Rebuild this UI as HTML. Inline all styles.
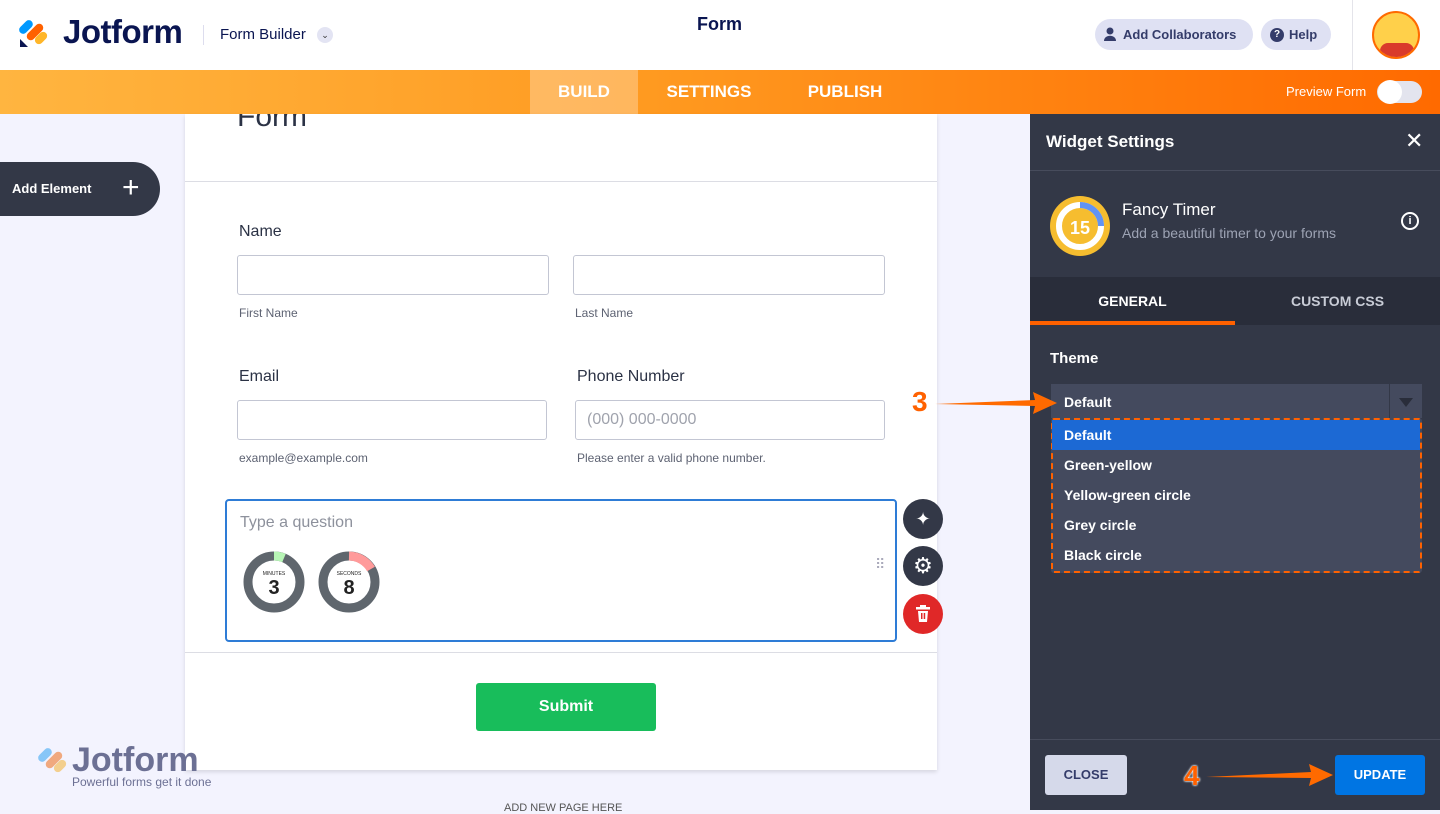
<!DOCTYPE html>
<html><head><meta charset="utf-8"><style>
*{box-sizing:border-box;margin:0;padding:0}
body{width:1440px;height:810px;overflow:hidden;background:#f3f3fe;font-family:"Liberation Sans",sans-serif;position:relative;color:#2b3245}
.abs{position:absolute}
.top{left:0;top:0;width:1440px;height:70px;background:#fff}
.bar{left:0;top:70px;width:1440px;height:44px;background:linear-gradient(90deg,#ffb540,#ff9a20 45%,#ff6a00)}
.tab{top:70px;height:44px;line-height:44px;color:#fff;font-size:17px;font-weight:bold;text-align:center}
.card{left:185px;top:114px;width:752px;height:656px;background:#fff;box-shadow:0 2px 4px rgba(0,0,0,.12)}
.lbl{font-size:16px;color:#2b3245}
.inp{border:1px solid #c3c6d3;border-radius:3px;background:#fff;height:40px}
.sub{font-size:12px;color:#5d6272}
.panel{left:1030px;top:114px;width:410px;height:696px;background:#333847}
.opt{left:1052px;width:368px;height:30px;line-height:30px;padding-left:12px;color:#fff;font-size:14px;font-weight:bold}
.rbtn{width:40px;height:40px;border-radius:50%;background:#333847}
</style></head><body>
<div class="abs top"></div>
<svg class="abs" style="left:19px;top:17px" width="30" height="32" viewBox="0 0 30 32">
<rect x="3" y="2" width="8" height="16" rx="4" transform="rotate(45 7 10)" fill="#0099ff"/>
<rect x="12" y="5" width="8" height="20" rx="4" transform="rotate(45 16 15)" fill="#ff6100"/>
<rect x="18" y="14" width="8" height="14" rx="4" transform="rotate(45 22 21)" fill="#ffb629"/>
<path d="M1 22 L1 30 L9 30 Z" fill="#0a1551"/></svg>
<div class="abs" style="left:63px;top:13px;font-size:33px;font-weight:bold;color:#0a1551;letter-spacing:-0.5px">Jotform</div>
<div class="abs" style="left:203px;top:25px;width:1px;height:20px;background:#dde"></div>
<div class="abs" style="left:220px;top:26px;font-size:15px;color:#0a1551">Form Builder</div>
<div class="abs" style="left:317px;top:27px;width:16px;height:16px;border-radius:50%;background:#e3e4f3;font-size:9px;text-align:center;line-height:16px;color:#333">⌄</div>
<div class="abs" style="left:697px;top:14px;font-size:18px;font-weight:bold;color:#0a1551">Form</div>
<div class="abs" style="left:1095px;top:19px;width:158px;height:31px;border-radius:16px;background:#dfe1f3;font-size:13px;font-weight:bold;color:#343c6a;line-height:31px;padding-left:28px">Add Collaborators</div>
<svg class="abs" style="left:1104px;top:27px" width="12" height="14"><circle cx="6" cy="4" r="3.5" fill="#343c6a"/><path d="M0 14 C0 7 12 7 12 14Z" fill="#343c6a"/></svg>
<div class="abs" style="left:1261px;top:19px;width:70px;height:31px;border-radius:16px;background:#dfe1f3;font-size:13px;font-weight:bold;color:#343c6a;line-height:31px;padding-left:28px">Help</div>
<div class="abs" style="left:1270px;top:28px;width:14px;height:14px;border-radius:50%;background:#343c6a;color:#fff;font-size:10px;text-align:center;line-height:14px;font-weight:bold">?</div>
<div class="abs" style="left:1352px;top:0;width:1px;height:70px;background:#e4e4ea"></div>
<div class="abs" style="left:1372px;top:11px;width:48px;height:48px;border-radius:50%;background:#ffd04a;border:2px solid #ff6a00;overflow:hidden"><div style="position:absolute;left:6px;top:30px;width:34px;height:20px;background:#d93a2b;border-radius:8px"></div></div>
<div class="abs bar"></div>
<div class="abs tab" style="left:530px;width:108px;background:rgba(255,255,255,.28)">BUILD</div>
<div class="abs tab" style="left:650px;width:118px">SETTINGS</div>
<div class="abs tab" style="left:790px;width:110px">PUBLISH</div>
<div class="abs" style="left:1286px;top:84px;color:#fff;font-size:13px">Preview Form</div>
<div class="abs" style="left:1377px;top:81px;width:45px;height:22px;border-radius:11px;background:#e3e4ee"></div>
<div class="abs" style="left:1378px;top:80px;width:24px;height:24px;border-radius:50%;background:#fff"></div>
<div class="abs" style="left:0;top:162px;width:160px;height:54px;border-radius:0 27px 27px 0;background:#333847;color:#fff;font-size:13px;font-weight:bold;line-height:54px;padding-left:12px">Add Element</div>
<div class="abs" style="left:122px;top:173px;color:#fff;font-size:30px;line-height:30px;font-weight:300">+</div>
<div class="abs card"></div>
<div class="abs" style="left:237px;top:100px;font-size:30px;color:#2b3245;clip-path:inset(14px 0 0 0)">Form</div>
<div class="abs" style="left:185px;top:181px;width:752px;height:1px;background:#dcdde4"></div>
<div class="abs lbl" style="left:239px;top:223px">Name</div>
<div class="abs inp" style="left:237px;top:255px;width:312px"></div>
<div class="abs inp" style="left:573px;top:255px;width:312px"></div>
<div class="abs sub" style="left:239px;top:306px">First Name</div>
<div class="abs sub" style="left:575px;top:306px">Last Name</div>
<div class="abs lbl" style="left:239px;top:368px">Email</div>
<div class="abs lbl" style="left:577px;top:368px">Phone Number</div>
<div class="abs inp" style="left:237px;top:400px;width:310px"></div>
<div class="abs inp" style="left:575px;top:400px;width:310px;color:#a0a3ad;font-size:16px;line-height:38px;padding-left:11px">(000) 000-0000</div>
<div class="abs sub" style="left:239px;top:451px">example@example.com</div>
<div class="abs sub" style="left:577px;top:451px">Please enter a valid phone number.</div>
<div class="abs" style="left:225px;top:499px;width:672px;height:143px;border:2px solid #2e7cd6;border-radius:4px"></div>
<div class="abs" style="left:240px;top:514px;font-size:16px;color:#8d919c">Type a question</div>
<svg class="abs" style="left:242px;top:549px" width="142" height="66">
<circle cx="32" cy="33" r="26" fill="none" stroke="#5f666d" stroke-width="9"/>
<path d="M32 7 A26 26 0 0 1 42 9" fill="none" stroke="#b7f5b5" stroke-width="9"/>
<circle cx="107" cy="33" r="26" fill="none" stroke="#5f666d" stroke-width="9"/>
<path d="M107 7 A26 26 0 0 1 129 20" fill="none" stroke="#ff9a9a" stroke-width="9"/>
<text x="32" y="26" font-size="5" text-anchor="middle" fill="#222" font-family="Liberation Sans">MINUTES</text>
<text x="32" y="45" font-size="20" font-weight="bold" text-anchor="middle" fill="#222" font-family="Liberation Sans">3</text>
<text x="107" y="26" font-size="5" text-anchor="middle" fill="#222" font-family="Liberation Sans">SECONDS</text>
<text x="107" y="45" font-size="20" font-weight="bold" text-anchor="middle" fill="#222" font-family="Liberation Sans">8</text></svg>
<div class="abs" style="left:875px;top:561px;color:#aab;font-size:14px;line-height:6px;letter-spacing:1px">⠿</div>
<div class="abs rbtn" style="left:903px;top:499px;color:#fff;text-align:center;line-height:40px;font-size:18px">✦</div>
<div class="abs rbtn" style="left:903px;top:546px;color:#fff;text-align:center;line-height:40px;font-size:22px">⚙</div>
<div class="abs rbtn" style="left:903px;top:594px;background:#e02828"></div>
<svg class="abs" style="left:915px;top:605px" width="16" height="18"><rect x="1" y="2" width="14" height="2.5" fill="#fff"/><rect x="5" y="0" width="6" height="3" fill="#fff"/><path d="M3 6 H13 L12 17 H4 Z" fill="#fff"/><rect x="6" y="8" width="1.5" height="6" fill="#e02828"/><rect x="8.7" y="8" width="1.5" height="6" fill="#e02828"/></svg>
<div class="abs" style="left:185px;top:652px;width:752px;height:1px;background:#dcdde4"></div>
<div class="abs" style="left:476px;top:683px;width:180px;height:48px;background:#18bd5b;border-radius:3px;color:#fff;font-weight:bold;font-size:16px;text-align:center;line-height:48px">Submit</div>
<div class="abs" style="left:504px;top:802px;font-size:11px;color:#555">ADD NEW PAGE HERE</div>
<svg class="abs" style="left:38px;top:745px;opacity:.7" width="30" height="32" viewBox="0 0 30 32">
<rect x="3" y="2" width="8" height="16" rx="4" transform="rotate(45 7 10)" fill="#5ab3f5"/>
<rect x="12" y="5" width="8" height="20" rx="4" transform="rotate(45 16 15)" fill="#f08a4a"/>
<rect x="18" y="14" width="8" height="14" rx="4" transform="rotate(45 22 21)" fill="#f3c060"/></svg>
<div class="abs" style="left:72px;top:741px;font-size:34px;font-weight:bold;color:#6c7094">Jotform</div>
<div class="abs" style="left:72px;top:775px;font-size:12px;color:#6c7094">Powerful forms get it done</div>
<div class="abs panel"></div>
<div class="abs" style="left:1046px;top:132px;color:#fff;font-size:17px;font-weight:bold">Widget Settings</div>
<div class="abs" style="left:1405px;top:128px;color:#fff;font-size:22px">✕</div>
<div class="abs" style="left:1030px;top:170px;width:410px;height:1px;background:#474c5c"></div>
<svg class="abs" style="left:1049px;top:196px" width="62" height="60"><circle cx="31" cy="30" r="30" fill="#f6bd2f"/><circle cx="31" cy="30" r="21" fill="none" stroke="#fff" stroke-width="6"/><path d="M31 9 A21 21 0 0 1 52 30" fill="none" stroke="#3a78f0" stroke-width="6" opacity=".8"/><text x="31" y="38" font-size="18" font-weight="bold" fill="#fff" text-anchor="middle" font-family="Liberation Sans">15</text></svg>
<div class="abs" style="left:1122px;top:200px;color:#fff;font-size:17px">Fancy Timer</div>
<div class="abs" style="left:1122px;top:225px;color:#9da3b4;font-size:14px">Add a beautiful timer to your forms</div>
<div class="abs" style="left:1401px;top:212px;width:18px;height:18px;border:2px solid #fff;border-radius:50%;color:#fff;font-size:11px;font-weight:bold;text-align:center;line-height:14px">i</div>
<div class="abs" style="left:1030px;top:277px;width:410px;height:48px;background:#292d3a"></div>
<div class="abs" style="left:1030px;top:277px;width:205px;height:48px;line-height:48px;text-align:center;color:#fff;font-size:14px;font-weight:bold">GENERAL</div>
<div class="abs" style="left:1030px;top:321px;width:205px;height:4px;background:#ff6100"></div>
<div class="abs" style="left:1235px;top:277px;width:205px;height:48px;line-height:48px;text-align:center;color:#c8ccd6;font-size:14px;font-weight:bold">CUSTOM CSS</div>
<div class="abs" style="left:1050px;top:350px;color:#fff;font-size:15px;font-weight:bold">Theme</div>
<div class="abs" style="left:1051px;top:384px;width:371px;height:34px;background:#444a5e"></div>
<div class="abs" style="left:1064px;top:394px;color:#fff;font-size:14px;font-weight:bold">Default</div>
<div class="abs" style="left:1389px;top:384px;width:1px;height:34px;background:#333847"></div>
<div class="abs" style="left:1399px;top:398px;width:0;height:0;border-left:7px solid transparent;border-right:7px solid transparent;border-top:9px solid #292d3a"></div>
<div class="abs" style="left:1051px;top:418px;width:371px;height:155px;background:#444a5e;border:2px dashed #ff6100;border-radius:3px"></div>
<div class="abs opt" style="top:420px;background:#1c69d4">Default</div>
<div class="abs opt" style="top:450px">Green-yellow</div>
<div class="abs opt" style="top:480px">Yellow-green circle</div>
<div class="abs opt" style="top:510px">Grey circle</div>
<div class="abs opt" style="top:540px">Black circle</div>
<div class="abs" style="left:912px;top:386px;color:#ff6100;font-size:28px;font-weight:bold;text-shadow:0 0 2px #fff,0 0 2px #fff">3</div>
<svg class="abs" style="left:935px;top:390px" width="125" height="26"><path d="M0 14 L100 10 L98 2 L122 13 L98 24 L100 16 Z" fill="#ff6a00"/></svg>
<div class="abs" style="left:1030px;top:739px;width:410px;height:1px;background:#474c5c"></div>
<div class="abs" style="left:1045px;top:755px;width:82px;height:40px;background:#d5d9ea;border-radius:3px;color:#343c6a;font-size:13px;font-weight:bold;text-align:center;line-height:40px">CLOSE</div>
<div class="abs" style="left:1335px;top:755px;width:90px;height:40px;background:#0075e3;border-radius:3px;color:#fff;font-size:13px;font-weight:bold;text-align:center;line-height:40px">UPDATE</div>
<div class="abs" style="left:1184px;top:760px;color:#ff6100;font-size:28px;font-weight:bold;text-shadow:0 0 2px #fff,0 0 2px #fff">4</div>
<svg class="abs" style="left:1206px;top:762px" width="130" height="26"><path d="M0 15 L105 10 L103 2 L127 13 L103 24 L105 16 Z" fill="#ff6a00"/></svg>
</body></html>
